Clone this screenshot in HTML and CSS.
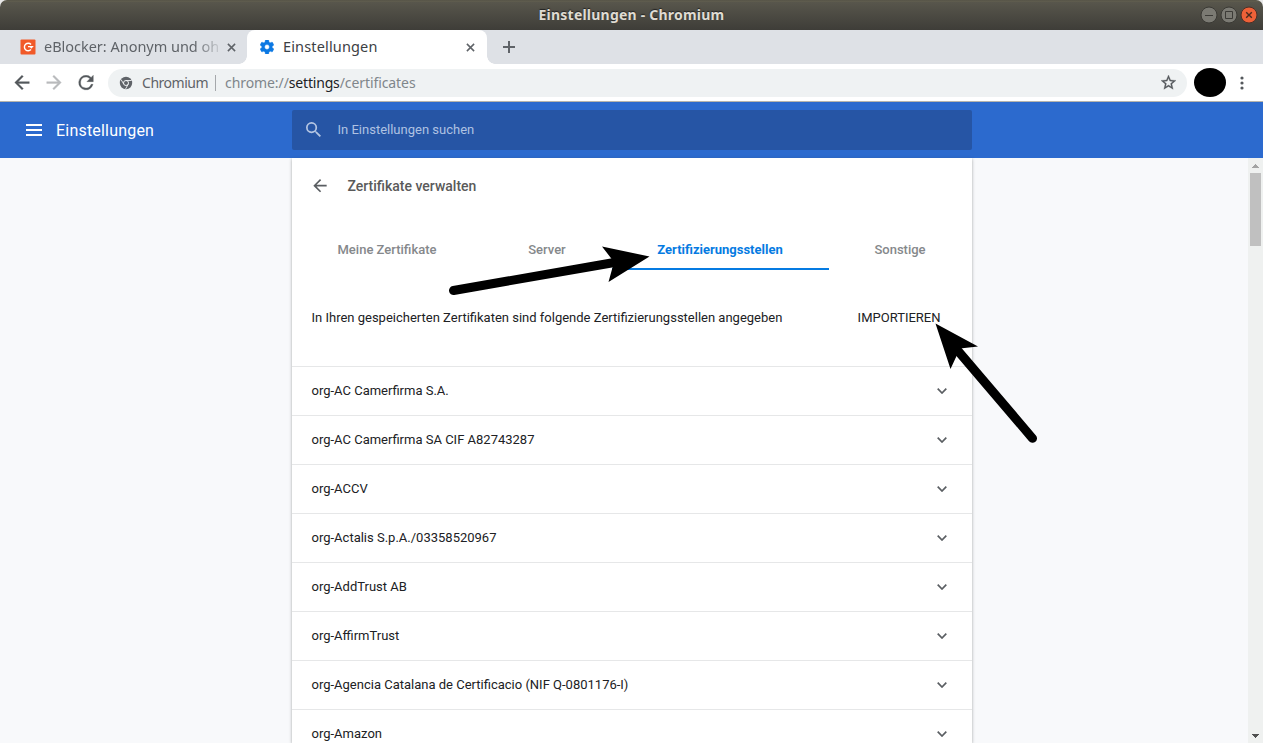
FILE: index.html
```html
<!DOCTYPE html>
<html lang="de">
<head>
<meta charset="utf-8">
<title>Einstellungen</title>
<link rel="stylesheet" href="styles.css">
</head>
<body>
<div class="window">
  <header class="titlebar">
    <span class="window-title">Einstellungen - Chromium</span>
    <div class="window-buttons">
      <svg width="18" height="18" viewBox="0 0 18 18"><circle cx="9" cy="9" r="8" fill="#7b7a73" stroke="#3a3934"/><path d="M5 9.5h8" stroke="#3c3b37"/></svg>
      <svg width="18" height="18" viewBox="0 0 18 18"><circle cx="9" cy="9" r="8" fill="#7b7a73" stroke="#3a3934"/><path d="M5.5 5.5h7v7h-7z" fill="none" stroke="#3c3b37"/></svg>
      <svg width="18" height="18" viewBox="0 0 18 18"><circle cx="9" cy="9" r="8" fill="#ee6138" stroke="#4b3028"/><path d="M6.2 6.2l5.6 5.6M11.8 6.2l-5.6 5.6" stroke="#4b2a1e" stroke-width="1.4"/></svg>
    </div>
  </header>
  <div class="tabstrip">
    <div class="tab">
      <svg class="favicon" width="16" height="16" viewBox="0 0 16 16"><rect x=".5" y=".5" width="15" height="15" rx="1" fill="#f15a29"/><path d="M11 10.600A3.800 3.800 0 1 1 11 5.400" fill="none" stroke="#fff" stroke-width="1.400"/><path d="M8 7h5.800L11.300 9.800 10 8.200H8z" fill="#fff"/></svg>
      <span class="tab-title faded">eBlocker: Anonym und oh</span>
      <svg class="close" width="10" height="10" viewBox="0 0 10 10"><path d="M1 1l8 8M9 1L1 9" stroke="#5f6368" stroke-width="1.7"/></svg>
    </div>
    <div class="tab active">
      <svg class="favicon gear" width="14" height="14" viewBox="2 2 20 20"><path fill="#0b78e3" stroke="#0b78e3" stroke-width=".6" d="M19.43 12.98c.04-.32.07-.64.07-.98s-.03-.66-.07-.98l2.11-1.65c.19-.15.24-.42.12-.64l-2-3.46c-.12-.22-.39-.3-.61-.22l-2.49 1c-.52-.4-1.08-.73-1.69-.98l-.38-2.65C14.46 2.18 14.25 2 14 2h-4c-.25 0-.46.18-.49.42l-.38 2.65c-.61.25-1.17.59-1.69.98l-2.49-1c-.23-.09-.49 0-.61.22l-2 3.46c-.13.22-.07.49.12.64l2.11 1.65c-.04.32-.07.65-.07.98s.03.66.07.98l-2.11 1.65c-.19.15-.24.42-.12.64l2 3.46c.12.22.39.3.61.22l2.49-1c.52.4 1.08.73 1.69.98l.38 2.65c.03.24.24.42.49.42h4c.25 0 .46-.18.49-.42l.38-2.65c.61-.25 1.17-.59 1.69-.98l2.49 1c.23.09.49 0 .61-.22l2-3.46c.12-.22.07-.49-.12-.64l-2.11-1.65zM12 15.5A3.5 3.5 0 1 1 12 8.500a3.500 3.500 0 0 1 0 7z"/></svg>
      <span class="tab-title current">Einstellungen</span>
      <svg class="close" width="10" height="10" viewBox="0 0 10 10"><path d="M1 1l8 8M9 1L1 9" stroke="#5f6368" stroke-width="1.7"/></svg>
    </div>
    <svg class="new-tab" width="12" height="12" viewBox="0 0 12 12"><path d="M6 0v12M0 6h12" stroke="#5f6368" stroke-width="2"/></svg>
  </div>
  <div class="toolbar">
    <svg class="nav" width="16" height="16" viewBox="3.200 3.700 17.600 17.600"><path fill="#54585c" stroke="#54585c" stroke-width=".4" d="M20 11H7.830l5.590-5.590L12 4l-8 8 8 8 1.410-1.410L7.830 13H20z"/></svg>
    <svg class="nav" width="16" height="16" viewBox="3.200 3.700 17.600 17.600"><path fill="#b9bbbd" stroke="#b9bbbd" stroke-width=".4" d="M12 4l-1.410 1.410L16.170 11H4v2h12.170l-5.580 5.590L12 20l8-8z"/></svg>
    <svg class="nav" width="16" height="16" viewBox="3.200 3.700 17.600 17.600"><path fill="#54585c" stroke="#54585c" stroke-width=".4" d="M17.650 6.350A7.960 7.960 0 0 0 12 4a8 8 0 1 0 7.730 10h-2.080A6 6 0 1 1 12 6c1.660 0 3.140.69 4.220 1.780L13 11h7V4z"/></svg>
    <div class="omnibox">
      <svg width="14" height="14" viewBox="0 0 14 14"><circle cx="7" cy="7" r="6.200" fill="#5f6368"/><circle cx="7" cy="7" r="2.500" fill="#5f6368" stroke="#f1f3f4"/><path d="M7 4.500h5.600M4.800 8.200L2 3.500M9.200 8.200l-2.700 4.900" stroke="#f1f3f4" stroke-width=".9"/></svg>
      <span class="origin">Chromium</span>
      <span class="divider"></span>
      <span class="url">chrome://<b>settings</b>/certificates</span>
      <svg class="star" width="15" height="15" viewBox="2 2 20 20"><path fill="#54585c" stroke="#54585c" stroke-width=".4" d="M22 9.240l-7.190-.62L12 2 9.190 8.630 2 9.240l5.460 4.730L5.820 21 12 17.270 18.180 21l-1.630-7.030zM12 15.400l-3.760 2.270 1-4.280-3.320-2.880 4.380-.38L12 6.100l1.710 4.040 4.380.38-3.320 2.880 1 4.280z"/></svg>
    </div>
    <span class="avatar"></span>
    <svg class="more" width="4" height="14" viewBox="0 0 4 14" fill="#54585c"><circle cx="2" cy="2" r="1.600"/><circle cx="2" cy="7" r="1.600"/><circle cx="2" cy="12" r="1.600"/></svg>
  </div>
  <div class="settings-bar">
    <svg width="16" height="12" viewBox="0 0 16 12"><path d="M0 1h16M0 6h16M0 11h16" stroke="#fff" stroke-width="2"/></svg>
    <span class="app-title">Einstellungen</span>
    <div class="search">
      <svg width="15" height="15" viewBox="3 3 17.500 17.500"><path fill="#b5c6e3" d="M15.500 14h-.79l-.28-.27A6.470 6.470 0 0 0 16 9.500 6.500 6.500 0 1 0 9.500 16c1.610 0 3.090-.59 4.230-1.570l.27.28v.79l5 4.990L20.490 19zm-6 0a4.500 4.500 0 1 1 0-9 4.500 4.500 0 0 1 0 9z"/></svg>
      <span>In Einstellungen suchen</span>
    </div>
  </div>
  <main class="content">
    <section class="card">
      <div class="page-head">
        <svg width="14" height="14" viewBox="3.600 4 16.800 16.800"><path fill="#5a5e62" d="M20 11H7.830l5.590-5.590L12 4l-8 8 8 8 1.410-1.410L7.830 13H20z"/></svg>
        <h1>Zertifikate verwalten</h1>
      </div>
      <nav class="cert-tabs">
        <span>Meine Zertifikate</span><span>Server</span><span class="selected">Zertifizierungsstellen</span><span class="last">Sonstige</span>
      </nav>
      <div class="intro"><span>In Ihren gespeicherten Zertifikaten sind folgende Zertifizierungsstellen angegeben</span><span class="import">IMPORTIEREN</span></div>
      <div class="row"><span>org-AC Camerfirma S.A.</span><svg class="chevron" viewBox="0 0 10 6"><path d="M.7.7L5 5 9.300.7"/></svg></div>
      <div class="row"><span>org-AC Camerfirma SA CIF A82743287</span><svg class="chevron" viewBox="0 0 10 6"><path d="M.7.7L5 5 9.300.7"/></svg></div>
      <div class="row"><span>org-ACCV</span><svg class="chevron" viewBox="0 0 10 6"><path d="M.7.7L5 5 9.300.7"/></svg></div>
      <div class="row"><span>org-Actalis S.p.A./03358520967</span><svg class="chevron" viewBox="0 0 10 6"><path d="M.7.7L5 5 9.300.7"/></svg></div>
      <div class="row"><span>org-AddTrust AB</span><svg class="chevron" viewBox="0 0 10 6"><path d="M.7.7L5 5 9.300.7"/></svg></div>
      <div class="row"><span>org-AffirmTrust</span><svg class="chevron" viewBox="0 0 10 6"><path d="M.7.7L5 5 9.300.7"/></svg></div>
      <div class="row"><span>org-Agencia Catalana de Certificacio (NIF Q-0801176-I)</span><svg class="chevron" viewBox="0 0 10 6"><path d="M.7.7L5 5 9.300.7"/></svg></div>
      <div class="row"><span>org-Amazon</span><svg class="chevron" viewBox="0 0 10 6"><path d="M.7.7L5 5 9.300.7"/></svg></div>
    </section>
    <div class="scrollbar">
      <svg width="7" height="4" viewBox="0 0 7 4" shape-rendering="crispEdges"><path d="M3 0h1v1h1v1h1v1h1v1H0V3h1V2h1V1h1z" fill="#a3a3a3"/></svg>
      <span class="thumb"></span>
      <svg class="down" width="7" height="4" viewBox="0 0 7 4" shape-rendering="crispEdges"><path d="M0 0h7v1H6v1H5v1H4v1H3V3H2V2H1V1H0z" fill="#505050"/></svg>
    </div>
  </main>
  <svg class="annotations" width="1263" height="743" viewBox="0 0 1263 743">
    <path d="M453.500 290.500L620 261.500M1032.500 438.300L953 345" stroke="#000" stroke-width="9" stroke-linecap="round"/>
    <path d="M649.500 256.500L602 246.500 614 262 608.500 282zM935.500 323.500L978 346.500 960 348.500 950.500 369z"/>
  </svg>
</div>
</body>
</html>
```
FILE: styles.css
```css
* { box-sizing: border-box; }
body { margin: 0; background: #e8e8e8; font-family: Roboto, sans-serif; font-size: 13px; }
svg { display: block; flex: none; }
.window { position: relative; width: 1263px; height: 743px; overflow: hidden; display: flex; flex-direction: column; }
.titlebar { height: 30px; flex: none; display: flex; align-items: center; justify-content: center; border-radius: 7px 7px 0 0; background: linear-gradient(#4e4c44 0, #64614f 1px, #58564c 2px, #3e3d38 100%); }
.window-title { font: bold 14px/30px "Noto Sans", sans-serif; color: #dfdbd2; letter-spacing: 0.22px; text-shadow: 0 -1px 1px #222; }
.window-buttons { position: absolute; right: 5px; top: 6px; display: flex; gap: 2px; }
.tabstrip { height: 34px; flex: none; display: flex; background: #dee1e6; font: 14.500px/34px "Noto Sans", sans-serif; }
.tab { width: 247px; padding: 0 11px 0 20px; display: flex; align-items: center; color: #5f6368; }
.active { width: 240px; padding-left: 13px; padding-right: 12px; position: relative; background: #fff; border-radius: 8px 8px 0 0; color: #3c4043; }
.active::before, .active::after { content: ""; position: absolute; bottom: 0; width: 8px; height: 8px; }
.active::before { left: -8px; background: radial-gradient(circle at 0 0, transparent 7.500px, #fff 8px); }
.active::after { right: -8px; background: radial-gradient(circle at 100% 0, transparent 7.500px, #fff 8px); }
.tab-title { margin-left: 8px; padding-bottom: 2px; line-height: 32px; white-space: nowrap; }
.current { margin-left: 9px; letter-spacing: 0.15px; }
.faded { width: 174px; overflow: hidden; letter-spacing: -0.02px; -webkit-mask-image: linear-gradient(90deg, #000 150px, transparent 180px); mask-image: linear-gradient(90deg, #000 150px, transparent 180px); }
.close { width: 9px; height: 9px; margin-left: auto; }
.new-tab { margin: 11px 0 0 16px; }
.toolbar { height: 38px; flex: none; display: flex; align-items: center; padding-left: 14px; background: #fff; border-bottom: 1px solid #b6b4ad; }
.nav { margin-right: 16px; }
.omnibox { width: 1079px; height: 28px; margin-left: -2px; padding: 0 11px 0 11px; border-radius: 14px; background: #eff2f3; display: flex; align-items: center; font: 14px/28px "Noto Sans", sans-serif; }
.origin { width: 66px; margin-left: 9px; color: #5f6368; letter-spacing: -0.47px; }
.divider { width: 1px; height: 16px; margin: 0 9px 0 7px; background: #a5a8ab; }
.url { color: #80868b; white-space: nowrap; letter-spacing: -0.08px; }
.url span, .url b { letter-spacing: -0.18px; }
.url b { font-weight: 400; color: #202124; }
.star { margin-left: auto; }
.avatar { width: 32px; height: 29px; margin-left: 7px; border-radius: 50%; background: #000; }
.more { margin-left: 14px; }
.settings-bar { height: 56px; flex: none; display: flex; align-items: center; padding-left: 26px; background: #2c6ace; color: #fff; }
.app-title { width: 236px; margin-left: 14px; font-size: 16px; letter-spacing: 0.2px; }
.search { width: 680px; height: 40px; display: flex; align-items: center; padding-left: 14px; gap: 16.500px; border-radius: 2px; background: #2655a5; color: #afc2e2; }
.search svg { margin-bottom: 1px; }
.search span { padding-bottom: 2px; }
.content { flex: 1; min-height: 0; display: flex; background: #f8f9fb; }
.card { width: 680px; height: 585px; margin-left: 292px; overflow: hidden; background: #fff; box-shadow: 0 1px 3px 0 rgba(60,64,67,.45); color: #202124; }
.page-head { height: 56px; display: flex; align-items: center; padding-left: 21px; gap: 20.500px; color: #5a5a5a; }
h1 { margin: 0; font-size: 14px; font-weight: 500; }
.cert-tabs { height: 40px; margin-top: 16px; display: grid; grid-template-columns: 190px 130px 217px 143px; line-height: 39px; text-align: center; font-weight: 500; color: #85888b; }
.selected { height: 40px; padding-right: 1px; border-bottom: 2px solid #057be2; color: #057be2; font-weight: 700; }
.last { padding-right: 1px; }
.selected, .last { white-space: nowrap; }
.intro { height: 96px; display: flex; justify-content: space-between; padding: 0 31.500px 0 19.500px; line-height: 95px; }
.row { height: 49px; display: flex; align-items: center; justify-content: space-between; padding: 0 25px 0 19.500px; border-top: 1px solid #e6e7e8; }
.row span { padding-bottom: 2px; }
.chevron { width: 10px; height: 6px; fill: none; stroke: #5a5e62; stroke-width: 1.700; }
.scrollbar { width: 15px; margin-left: auto; padding: 6px 2px 5px; display: flex; flex-direction: column; align-items: center; background: #eff1f0; }
.thumb { width: 11px; height: 73px; margin-top: 5px; background: #c0c0c0; }
.down { margin-top: auto; }
.annotations { position: absolute; left: 0; top: 0; }
```
